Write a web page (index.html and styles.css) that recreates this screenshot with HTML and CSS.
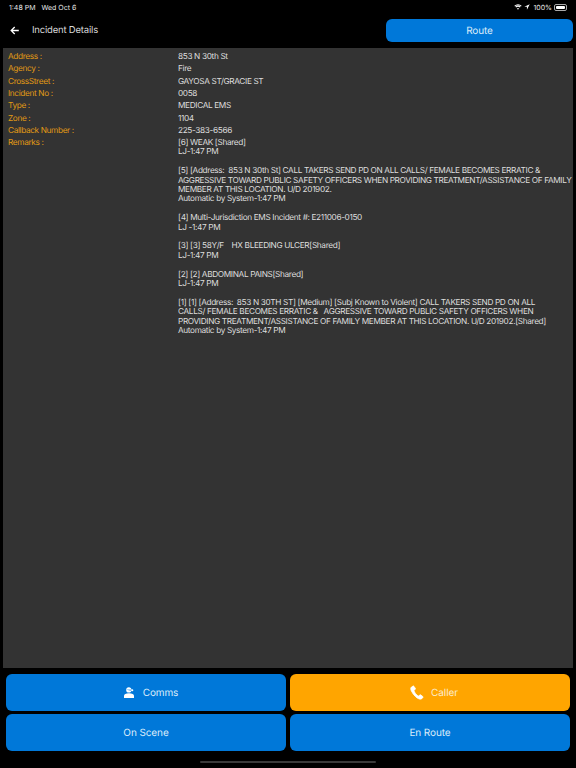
FILE: index.html
```html
<!DOCTYPE html>
<html lang="en">
<head>
    <meta charset="UTF-8">
    <title>Incident Details</title>
    <link rel="stylesheet" href="styles.css">
</head>
<body>
<div class="status">
    <div class="status-left"><span>1:48 PM</span><span>Wed Oct 6</span></div>
    <div class="status-right">
        <svg width="8" height="6" viewBox="0 0 11 8"><path d="M5.500 1.600c1.600 0 3 .6 4.100 1.700l.9-1A7.200 7.200 0 0 0 5.500.2 7.200 7.200 0 0 0 .5 2.300l.9 1a5.800 5.800 0 0 1 4.100-1.700zM5.500 3.700c1 0 1.900.4 2.600 1l.9-1a5.100 5.100 0 0 0-7 0l.9 1c.7-.6 1.600-1 2.600-1zM5.500 5.600c-.6 0-1.100.2-1.500.6l1.500 1.600L7 6.200c-.4-.4-.9-.6-1.500-.6z" fill="#fff"/></svg>
        <svg class="arrow" width="6" height="6" viewBox="0 0 8 8"><path d="M7.600.4.400 3.700h3.500v3.900z" fill="#fff"/></svg>
        <span>100%</span>
        <div class="battery"><div class="battery-fill"></div></div>
    </div>
</div>
<div class="header">
    <svg class="back" width="9" height="9" viewBox="0 0 9 9"><path d="M8.800 4.500H1.200M4.700 1 1.200 4.500 4.700 8" fill="none" stroke="#fff" stroke-width="1.300"/></svg>
    <div class="title">Incident Details</div>
    <div class="btn route">Route</div>
</div>
<div class="panel">
    <div class="row"><div class="label">Address :</div><div class="value">853 N 30th St</div></div>
    <div class="row"><div class="label">Agency :</div><div class="value">Fire</div></div>
    <div class="row"><div class="label">CrossStreet :</div><div class="value">GAYOSA ST/GRACIE ST</div></div>
    <div class="row"><div class="label">Incident No :</div><div class="value">0058</div></div>
    <div class="row"><div class="label">Type :</div><div class="value">MEDICAL EMS</div></div>
    <div class="row"><div class="label">Zone :</div><div class="value">1104</div></div>
    <div class="row"><div class="label">Callback Number :</div><div class="value">225-383-6566</div></div>
    <div class="row">
        <div class="label">Remarks :</div>
        <div class="value remarks">[6] WEAK [Shared]
LJ-1:47 PM

[5] [Address:  853 N 30th St] CALL TAKERS SEND PD ON ALL CALLS/ FEMALE BECOMES ERRATIC &amp;
AGGRESSIVE TOWARD PUBLIC SAFETY OFFICERS WHEN PROVIDING TREATMENT/ASSISTANCE OF FAMILY
MEMBER AT THIS LOCATION. U/D 201902.
Automatic by System-1:47 PM

[4] Multi-Jurisdiction EMS Incident #: E211006-0150
LJ -1:47 PM

[3] [3] 58Y/F    HX BLEEDING ULCER[Shared]
LJ-1:47 PM

[2] [2] ABDOMINAL PAINS[Shared]
LJ-1:47 PM

[1] [1] [Address:  853 N 30TH ST] [Medium] [Subj Known to Violent] CALL TAKERS SEND PD ON ALL
CALLS/ FEMALE BECOMES ERRATIC &amp;   AGGRESSIVE TOWARD PUBLIC SAFETY OFFICERS WHEN
PROVIDING TREATMENT/ASSISTANCE OF FAMILY MEMBER AT THIS LOCATION. U/D 201902.[Shared]
Automatic by System-1:47 PM</div>
    </div>
</div>
<div class="actions">
    <div class="btn with-icon comms">
        <svg width="10" height="11" viewBox="0 0 10 11"><circle cx="4.800" cy="2.900" r="2.600" fill="#fff"/><path d="M2 2.300h6v1.700H6z" fill="#8cc4f0"/><path d="M0 11V9c0-1.800 1.800-2.800 5-2.800s5 1 5 2.800v2z" fill="#fff"/><circle cx="8.300" cy="3.300" r="1" fill="#fff"/></svg>
        <span>Comms</span>
    </div>
    <div class="btn with-icon orange">
        <svg width="14" height="15" viewBox="0 0 16 16"><path d="M3.400.7 1.700 1.800C.6 2.600.6 4.300 1.600 6.300c1.100 2.300 2.900 4.800 4.900 6.600 2 1.800 4.300 3 6 2.600.9-.2 1.800-1 2.300-1.900.2-.4.100-.7-.2-1l-2.500-1.900c-.4-.2-.7-.2-1 .1l-1 1.100c-.3.200-.6.200-.9 0-1-.7-2-1.700-2.900-2.800-.8-1-1.400-2-1.800-3-.1-.3 0-.6.200-.8l1.200-.8c.4-.3.400-.6.300-1L4.600 1c-.3-.5-.8-.6-1.200-.3z" fill="#fff" stroke="#fff" stroke-width=".9" stroke-linejoin="round"/></svg>
        <span>Caller</span>
    </div>
    <div class="btn">On Scene</div>
    <div class="btn">En Route</div>
</div>
<div class="home-bar"></div>
</body>
</html>
```
FILE: styles.css
```css
*{
    margin: 0;
    padding: 0;
    box-sizing: border-box;
}
html,body{
    height: 100%;
}
body{
    width: 576px;
    height: 768px;
    background: #000;
    color: #fff;
    font-family: Inter, "Liberation Sans", sans-serif;
    text-rendering: geometricPrecision;
    display: flex;
    flex-direction: column;
    position: relative;
    overflow: hidden;
}
.status{
    height: 14px;
    padding: 0 9px;
    display: flex;
    justify-content: space-between;
    align-items: center;
    font-size: 7px;
    color: #e6e6e6;
}
.status-left{
    display: flex;
    gap: 6px;
}
.status-right{
    display: flex;
    align-items: center;
    gap: 2px;
}
.arrow{
    margin-right: 1px;
}
.battery{
    width: 13px;
    height: 7px;
    padding: 1px;
    border-radius: 2px;
    border: 0.5px solid #aaa;
}
.battery-fill{
    height: 100%;
    background: #fff;
    border-radius: 1px;
}
.header{
    height: 34px;
    padding: 5px 3px 6px 10px;
    display: flex;
    align-items: center;
}
.back{
    margin-right: 13px;
}
.title{
    flex: 1;
    font-size: 9.500px;
    letter-spacing: -0.2px;
    color: #d8d8d8;
}
.btn{
    background: #0078d9;
    border-radius: 6px;
    color: #dcecfa;
    font-size: 10px;
    letter-spacing: -0.1px;
    display: flex;
    align-items: center;
    justify-content: center;
}
.with-icon{
    padding-left: 8px;
    gap: 7px;
}
.comms{
    padding-left: 10px;
    gap: 9px;
}
.route{
    width: 187px;
    height: 23px;
}
.orange{
    background: #ffa500;
    color: #fdeccc;
}
.panel{
    flex: 1;
    margin: 0 3px;
    padding: 2px 5px;
    background: #333;
    font-size: 8.250px;
    letter-spacing: -0.36px;
    line-height: 12.350px;
}
.row{
    display: flex;
}
.label{
    width: 170px;
    flex: none;
    color: #e19a13;
}
.value{
    color: #dedede;
}
.remarks{
    white-space: pre;
    padding-top: 1.500px;
    line-height: 9.400px;
}
.actions{
    padding: 6px 6px 17px;
    display: grid;
    grid-template-columns: 280px 280px;
    grid-auto-rows: 37px;
    gap: 3px 4px;
}
.home-bar{
    position: absolute;
    left: 200px;
    bottom: 5px;
    width: 176px;
    height: 2px;
    border-radius: 1px;
    background: #3a3a3a;
}
```
